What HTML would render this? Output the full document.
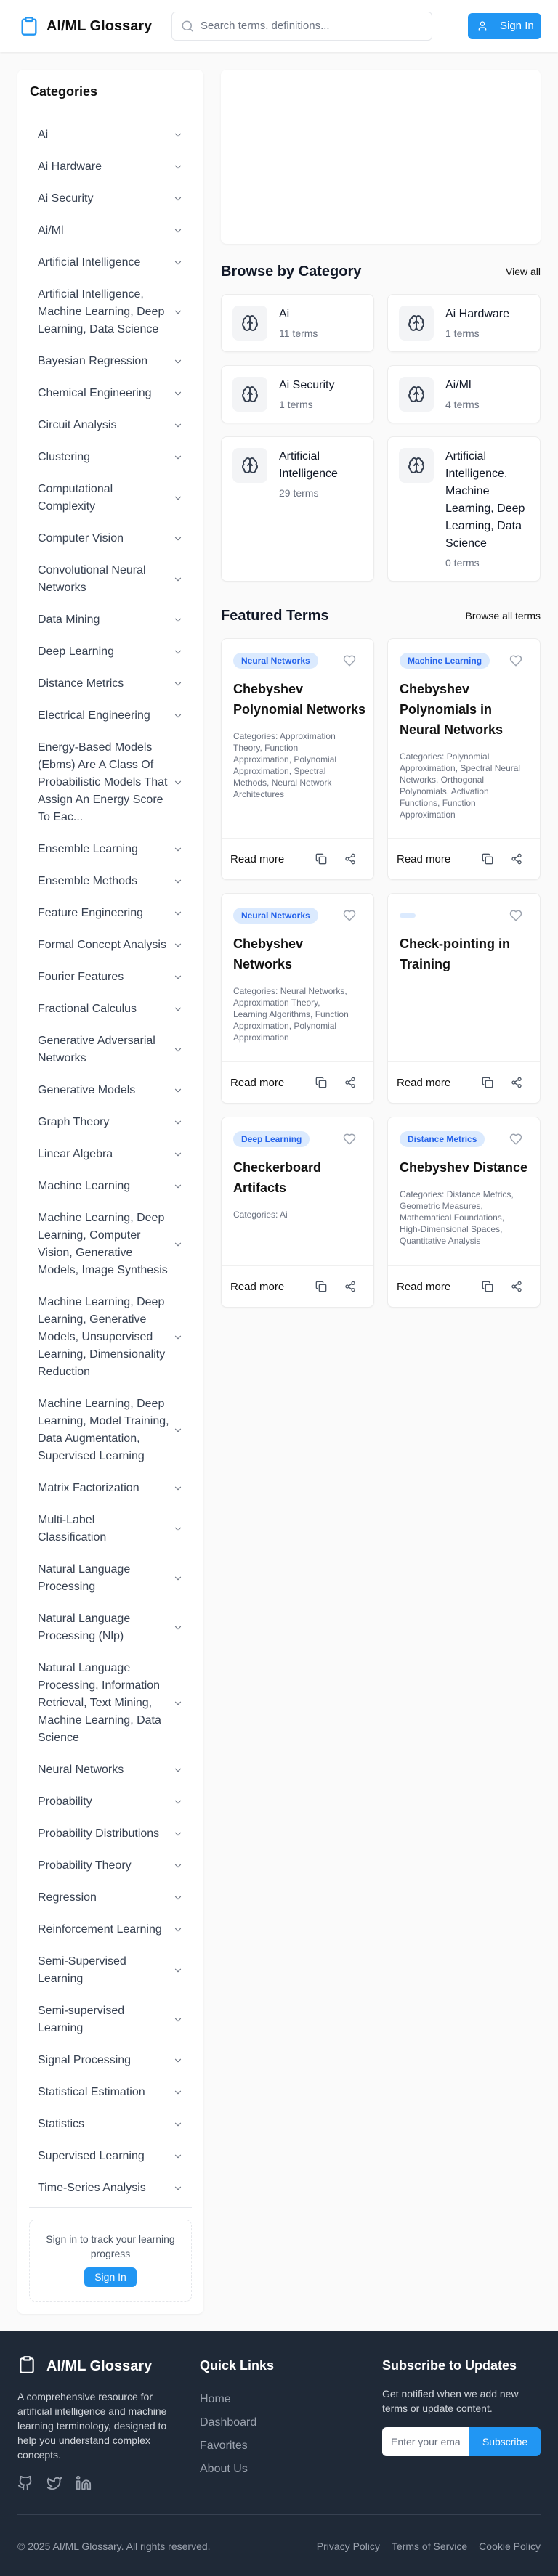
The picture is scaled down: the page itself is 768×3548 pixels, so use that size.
<!DOCTYPE html>
<html><head><meta charset="utf-8">
<style>
*{box-sizing:border-box;margin:0;padding:0}
body{width:768px;height:3548px;background:#fafafa;font-family:"Liberation Sans",sans-serif;color:#111827;position:relative;overflow:hidden}
svg{display:block}
.hdr{position:absolute;left:0;top:0;width:768px;height:72px;background:#fff;box-shadow:0 1px 3px rgba(0,0,0,.08)}
.side{position:absolute;left:24px;top:96px;width:256px;height:3091px;background:#fff;border-radius:8px;box-shadow:0 1px 3px rgba(0,0,0,.06)}
.side h2{position:absolute;left:17px;top:18px;font-size:18px;font-weight:600;line-height:24px;color:#111}
.list{position:absolute;left:16px;top:68px;width:224px}
.it{display:flex;align-items:center;justify-content:space-between;padding:10px 12px;font-size:16px;line-height:24px;color:#374151}
.it span{width:182px;white-space:nowrap}
.main{position:absolute;left:304px;top:96px;width:440px}
.ad{height:240px;background:#fff;border-radius:8px;box-shadow:0 1px 3px rgba(0,0,0,.06)}
.sh{display:flex;justify-content:space-between;align-items:center;height:28px}
.sh h3{font-size:20px;font-weight:700}
.sh a{font-size:14px;color:#111}
.grid{display:grid;grid-template-columns:211px 211px;column-gap:18px;row-gap:18px}
.cc{background:#fff;border:1px solid #ececec;border-radius:8px;padding:15px;display:flex;gap:16px;box-shadow:0 1px 2px rgba(0,0,0,.04)}
.ib{width:48px;height:48px;background:#f3f4f6;border-radius:8px;flex:none;display:flex;align-items:center;justify-content:center}
.cc .t{font-size:16px;line-height:24px;color:#111827}
.cc .n{font-size:14px;line-height:20px;color:#6b7280;margin-top:4px}
.fc{background:#fff;border:1px solid #ececec;border-radius:8px;display:flex;flex-direction:column;box-shadow:0 1px 2px rgba(0,0,0,.04);overflow:hidden}
.fb{flex:1;padding:19px 16px 24px}
.top{display:flex;justify-content:space-between;align-items:center;height:22px;margin-bottom:14px}
.badge{background:#dbeafe;color:#2563eb;font-size:12px;font-weight:600;border-radius:11px;height:22px;line-height:22px;padding:0 11px}
.fc h4{font-size:18px;font-weight:600;line-height:28px;color:#111;margin-bottom:15px;white-space:nowrap}
.cat{font-size:12px;line-height:16px;color:#6b7280;white-space:nowrap}
.ff{height:57px;flex:none;border-top:1px solid #f0f0f0;display:flex;align-items:center;padding:0 12px;font-size:15px;font-weight:500;color:#111}
.ff .rm{flex:1}
.ff svg{margin-left:24px;margin-right:0}
.foot{position:absolute;left:0;top:3211px;width:768px;height:337px;background:#1f2937;color:#fff}
</style></head><body>

<div class="hdr">
  <svg style="position:absolute;left:26px;top:22px" width="28" height="28" viewBox="0 0 24 24" fill="none" stroke="#2196f3" stroke-width="2" stroke-linecap="round" stroke-linejoin="round"><rect x="8" y="2" width="8" height="4" rx="1"/><path d="M16 4h2a2 2 0 0 1 2 2v14a2 2 0 0 1-2 2H6a2 2 0 0 1-2-2V6a2 2 0 0 1 2-2h2"/></svg>
  <div style="position:absolute;left:64px;top:24px;font-size:20px;font-weight:700;line-height:24px;color:#111">AI/ML Glossary</div>
  <div style="position:absolute;left:236px;top:16px;width:359px;height:40px;border:1px solid #e5e7eb;border-radius:6px;background:#fff">
    <svg style="position:absolute;left:12px;top:10px" width="18" height="18" viewBox="0 0 24 24" fill="none" stroke="#9ca3af" stroke-width="2" stroke-linecap="round"><circle cx="11" cy="11" r="8"/><path d="m21 21-4.3-4.3"/></svg>
    <div style="position:absolute;left:39px;top:10px;font-size:15px;color:#6b7280;line-height:18px">Search terms, definitions...</div>
  </div>
  <div style="position:absolute;left:644px;top:18px;width:101px;height:36px;background:#2196f3;border-radius:6px;color:#fff">
    <svg style="position:absolute;left:12px;top:10px" width="16" height="16" viewBox="0 0 24 24" fill="none" stroke="#fff" stroke-width="2" stroke-linecap="round"><path d="M19 21v-2a4 4 0 0 0-4-4H9a4 4 0 0 0-4 4v2"/><circle cx="12" cy="7" r="4"/></svg>
    <div style="position:absolute;left:44px;top:9px;font-size:15px;line-height:18px">Sign In</div>
  </div>
</div>

<div class="side">
  <h2>Categories</h2>
  <div class="list" id="list"></div>
  <div style="position:absolute;left:16px;top:2944px;width:224px;border-top:1px solid #e5e7eb"></div>
  <div style="position:absolute;left:16px;top:2961px;width:224px;height:113px;border:1px dashed #e5e7eb;border-radius:8px;text-align:center">
    <div style="margin-top:16px;font-size:14px;line-height:20px;color:#4b5563;padding:0 10px">Sign in to track your learning progress</div>
    <div style="display:inline-block;margin-top:9px;background:#2196f3;color:#fff;font-size:14px;line-height:27px;height:27px;padding:0 14px;border-radius:6px">Sign In</div>
  </div>
</div>

<div class="main">
  <div class="ad"></div>
  <div class="sh" style="margin-top:24px"><h3>Browse by Category</h3><a>View all</a></div>
  <div class="grid" style="margin-top:17px;grid-template-rows:80px 80px 200px">
    <div class="cc"><div class="ib">B</div><div><div class="t">Ai</div><div class="n">11 terms</div></div></div>
    <div class="cc"><div class="ib">B</div><div><div class="t">Ai Hardware</div><div class="n">1 terms</div></div></div>
    <div class="cc"><div class="ib">B</div><div><div class="t">Ai Security</div><div class="n">1 terms</div></div></div>
    <div class="cc"><div class="ib">B</div><div><div class="t">Ai/Ml</div><div class="n">4 terms</div></div></div>
    <div class="cc"><div class="ib">B</div><div><div class="t">Artificial Intelligence</div><div class="n">29 terms</div></div></div>
    <div class="cc"><div class="ib">B</div><div><div class="t">Artificial Intelligence, Machine Learning, Deep Learning, Data Science</div><div class="n">0 terms</div></div></div>
  </div>
  <div class="sh" style="margin-top:33px"><h3>Featured Terms</h3><a>Browse all terms</a></div>
  <div class="grid" style="margin-top:17px;grid-template-rows:333px 290px 263px">
    <div class="fc"><div class="fb"><div class="top"><span class="badge">Neural Networks</span>H</div><h4>Chebyshev<br>Polynomial Networks</h4><div class="cat">Categories: Approximation<br>Theory, Function<br>Approximation, Polynomial<br>Approximation, Spectral<br>Methods, Neural Network<br>Architectures</div></div><div class="ff">F</div></div>
    <div class="fc"><div class="fb"><div class="top"><span class="badge">Machine Learning</span>H</div><h4>Chebyshev<br>Polynomials in<br>Neural Networks</h4><div class="cat">Categories: Polynomial<br>Approximation, Spectral Neural<br>Networks, Orthogonal<br>Polynomials, Activation<br>Functions, Function<br>Approximation</div></div><div class="ff">F</div></div>
    <div class="fc"><div class="fb"><div class="top"><span class="badge">Neural Networks</span>H</div><h4>Chebyshev<br>Networks</h4><div class="cat">Categories: Neural Networks,<br>Approximation Theory,<br>Learning Algorithms, Function<br>Approximation, Polynomial<br>Approximation</div></div><div class="ff">F</div></div>
    <div class="fc"><div class="fb"><div class="top"><span class="badge" style="width:22px;height:6px;padding:0"></span>H</div><h4>Check-pointing in<br>Training</h4></div><div class="ff">F</div></div>
    <div class="fc"><div class="fb"><div class="top"><span class="badge">Deep Learning</span>H</div><h4>Checkerboard<br>Artifacts</h4><div class="cat">Categories: Ai</div></div><div class="ff">F</div></div>
    <div class="fc"><div class="fb"><div class="top"><span class="badge">Distance Metrics</span>H</div><h4>Chebyshev Distance</h4><div class="cat">Categories: Distance Metrics,<br>Geometric Measures,<br>Mathematical Foundations,<br>High-Dimensional Spaces,<br>Quantitative Analysis</div></div><div class="ff">F</div></div>
  </div>
</div>

<div class="foot">
  <svg style="position:absolute;left:24px;top:33px" width="26" height="26" viewBox="0 0 24 24" fill="none" stroke="#fff" stroke-width="2" stroke-linecap="round" stroke-linejoin="round"><rect x="8" y="2" width="8" height="4" rx="1"/><path d="M16 4h2a2 2 0 0 1 2 2v14a2 2 0 0 1-2 2H6a2 2 0 0 1-2-2V6a2 2 0 0 1 2-2h2"/></svg>
  <div style="position:absolute;left:64px;top:36px;font-size:20px;font-weight:700;line-height:24px">AI/ML Glossary</div>
  <div style="position:absolute;left:24px;top:80px;width:222px;font-size:14px;line-height:20px;color:#d1d5db">A comprehensive resource for artificial intelligence and machine learning terminology, designed to help you understand complex concepts.</div>
  <div style="position:absolute;left:24px;top:198px;display:flex;gap:18px">
    <svg width="22" height="22" viewBox="0 0 24 24" fill="none" stroke="#9ca3af" stroke-width="2" stroke-linecap="round" stroke-linejoin="round"><path d="M15 22v-4a4.8 4.8 0 0 0-1-3.5c3 0 6-2 6-5.5.08-1.25-.27-2.48-1-3.5.28-1.15.28-2.35 0-3.5 0 0-1 0-3 1.5-2.64-.5-5.36-.5-8 0C6 2 5 2 5 2c-.3 1.15-.3 2.35 0 3.5A5.403 5.403 0 0 0 4 9c0 3.5 3 5.5 6 5.5-.39.49-.68 1.05-.85 1.65-.17.6-.22 1.23-.15 1.85v4"/><path d="M9 18c-4.51 2-5-2-7-2"/></svg>
    <svg width="22" height="22" viewBox="0 0 24 24" fill="none" stroke="#9ca3af" stroke-width="2" stroke-linecap="round" stroke-linejoin="round"><path d="M22 4s-.7 2.1-2 3.4c1.6 10-9.4 17.3-18 11.6 2.2.1 4.4-.6 6-2C3 15.5.5 9.6 3 5c2.2 2.6 5.6 4.1 9 4-.9-4.2 4-6.6 7-3.8 1.1 0 3-1.2 3-1.2z"/></svg>
    <svg width="22" height="22" viewBox="0 0 24 24" fill="none" stroke="#9ca3af" stroke-width="2" stroke-linecap="round" stroke-linejoin="round"><path d="M16 8a6 6 0 0 1 6 6v7h-4v-7a2 2 0 0 0-2-2 2 2 0 0 0-2 2v7h-4v-7a6 6 0 0 1 6-6z"/><rect x="2" y="9" width="4" height="12"/><circle cx="4" cy="4" r="2"/></svg>
  </div>
  <div style="position:absolute;left:275px;top:35px;font-size:18px;font-weight:600;line-height:24px">Quick Links</div>
  <div style="position:absolute;left:275px;top:78px;font-size:16px;line-height:32px;color:#9ca3af">Home<br>Dashboard<br>Favorites<br>About Us</div>
  <div style="position:absolute;left:526px;top:35px;font-size:18px;font-weight:600;line-height:24px">Subscribe to Updates</div>
  <div style="position:absolute;left:526px;top:76px;width:220px;font-size:14px;line-height:20px;color:#d1d5db">Get notified when we add new terms or update content.</div>
  <div style="position:absolute;left:526px;top:132px;width:120px;height:40px;background:#fff;border-radius:6px 0 0 6px;color:#6b7280;font-size:14px;line-height:40px;padding-left:12px;overflow:hidden;white-space:nowrap">Enter your ema</div>
  <div style="position:absolute;left:646px;top:132px;width:98px;height:40px;background:#2196f3;border-radius:0 6px 6px 0;font-size:14px;line-height:40px;text-align:center">Subscribe</div>
  <div style="position:absolute;left:24px;top:252px;width:720px;border-top:1px solid #374151"></div>
  <div style="position:absolute;left:24px;top:286px;font-size:14px;line-height:20px;color:#9ca3af">© 2025 AI/ML Glossary. All rights reserved.</div>
  <div style="position:absolute;right:24px;top:286px;font-size:14px;line-height:20px;color:#9ca3af;display:flex;gap:16px"><span>Privacy Policy</span><span>Terms of Service</span><span>Cookie Policy</span></div>
</div>

<script>
var items=["Ai","Ai Hardware","Ai Security","Ai/Ml","Artificial Intelligence","Artificial Intelligence,|Machine Learning, Deep|Learning, Data Science","Bayesian Regression","Chemical Engineering","Circuit Analysis","Clustering","Computational|Complexity","Computer Vision","Convolutional Neural|Networks","Data Mining","Deep Learning","Distance Metrics","Electrical Engineering","Energy-Based Models|(Ebms) Are A Class Of|Probabilistic Models That|Assign An Energy Score|To Eac...","Ensemble Learning","Ensemble Methods","Feature Engineering","Formal Concept Analysis","Fourier Features","Fractional Calculus","Generative Adversarial|Networks","Generative Models","Graph Theory","Linear Algebra","Machine Learning","Machine Learning, Deep|Learning, Computer|Vision, Generative|Models, Image Synthesis","Machine Learning, Deep|Learning, Generative|Models, Unsupervised|Learning, Dimensionality|Reduction","Machine Learning, Deep|Learning, Model Training,|Data Augmentation,|Supervised Learning","Matrix Factorization","Multi-Label|Classification","Natural Language|Processing","Natural Language|Processing (Nlp)","Natural Language|Processing, Information|Retrieval, Text Mining,|Machine Learning, Data|Science","Neural Networks","Probability","Probability Distributions","Probability Theory","Regression","Reinforcement Learning","Semi-Supervised|Learning","Semi-supervised|Learning","Signal Processing","Statistical Estimation","Statistics","Supervised Learning","Time-Series Analysis"];
var chev='<svg width="14" height="14" viewBox="0 0 24 24" fill="none" stroke="#6b7280" stroke-width="2" stroke-linecap="round" stroke-linejoin="round"><path d="m6 9 6 6 6-6"/></svg>';
var h='';items.forEach(function(t){h+='<div class="it"><span>'+t.split('|').join('<br>')+'</span>'+chev+'</div>';});
document.getElementById('list').innerHTML=h;
var brain='<svg width="24" height="24" viewBox="0 0 24 24" fill="none" stroke="#374151" stroke-width="2" stroke-linecap="round" stroke-linejoin="round"><path d="M12 5a3 3 0 1 0-5.997.125 4 4 0 0 0-2.526 5.77 4 4 0 0 0 .556 6.588A4 4 0 1 0 12 18Z"/><path d="M12 5a3 3 0 1 1 5.997.125 4 4 0 0 1 2.526 5.77 4 4 0 0 1-.556 6.588A4 4 0 1 1 12 18Z"/><path d="M12 18V9"/><path d="m9 12 3-3 3 3"/></svg>';
document.querySelectorAll('.ib').forEach(function(e){e.innerHTML=brain;});
var heart='<svg width="18" height="18" viewBox="0 0 24 24" fill="none" stroke="#9ca3af" stroke-width="2" stroke-linecap="round" stroke-linejoin="round" style="margin-right:8px"><path d="M19 14c1.490-1.460 3-3.21 3-5.5A5.5 5.5 0 0 0 16.5 3c-1.76 0-3 .5-4.5 2-1.5-1.5-2.74-2-4.5-2A5.5 5.5 0 0 0 2 8.5c0 2.3 1.5 4.05 3 5.5l7 7Z"/></svg>';
document.querySelectorAll('.top').forEach(function(e){e.innerHTML=e.innerHTML.replace(/H$/,heart);});
var foot='<span class="rm">Read more</span><svg width="16" height="16" viewBox="0 0 24 24" fill="none" stroke="#4b5563" stroke-width="2" stroke-linecap="round" stroke-linejoin="round"><rect x="8" y="8" width="14" height="14" rx="2"/><path d="M4 16c-1.1 0-2-.9-2-2V4c0-1.1.9-2 2-2h10c1.1 0 2 .9 2 2"/></svg><svg width="16" height="16" viewBox="0 0 24 24" fill="none" stroke="#4b5563" stroke-width="2" stroke-linecap="round" stroke-linejoin="round" style="margin-right:12px"><circle cx="18" cy="5" r="3"/><circle cx="6" cy="12" r="3"/><circle cx="18" cy="19" r="3"/><path d="m8.59 13.51 6.83 3.98"/><path d="m15.41 6.51-6.82 3.98"/></svg>';
document.querySelectorAll('.ff').forEach(function(e){e.innerHTML=foot;});
</script>
</body></html>
